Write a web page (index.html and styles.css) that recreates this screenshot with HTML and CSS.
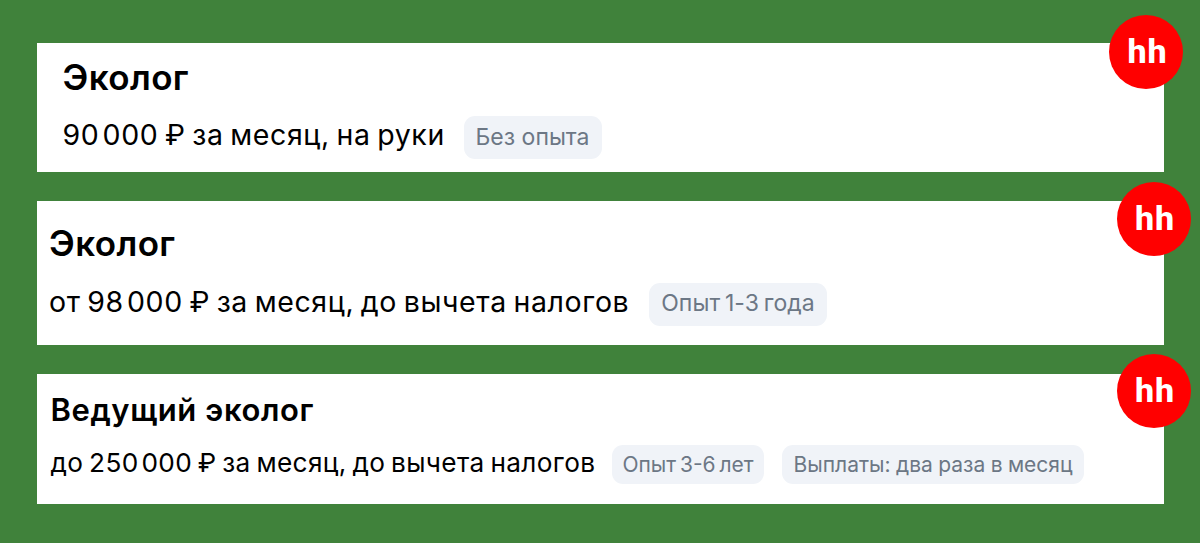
FILE: index.html
```html
<!DOCTYPE html>
<html lang="ru">
<head>
    <meta charset="utf-8">
    <title>Вакансии эколога</title>
    <link rel="stylesheet" href="styles.css">
</head>
<body>
    <div class="vacancies">
        <div class="card card-first">
            <h2>Эколог</h2>
            <div class="info">
                <span class="salary">90&#8202;000 ₽ за месяц, на руки</span>
                <span class="tag">Без опыта</span>
            </div>
            <div class="logo">hh</div>
        </div>

        <div class="card card-second">
            <h2>Эколог</h2>
            <div class="info">
                <span class="salary">от 98&#8202;000 ₽ за месяц, до вычета налогов</span>
                <span class="tag">Опыт 1-3 года</span>
            </div>
            <div class="logo">hh</div>
        </div>

        <div class="card card-third">
            <h2>Ведущий эколог</h2>
            <div class="info">
                <span class="salary">до 250&#8202;000 ₽ за месяц, до вычета налогов</span>
                <span class="tag">Опыт 3-6 лет</span>
                <span class="tag tag-payment">Выплаты: два раза в месяц</span>
            </div>
            <div class="logo">hh</div>
        </div>
    </div>
</body>
</html>
```
FILE: styles.css
```css
* {
    box-sizing: border-box;
}

body {
    margin: 0;
    height: 543px;
    font-family: Inter, "Liberation Sans", sans-serif;
    background-color: #40823b;
    color: #000;
    overflow: hidden;
}

.vacancies {
    display: flex;
    flex-direction: column;
    gap: 29px;
    padding: 43px 36.5px 0;
}

.card {
    position: relative;
    background-color: #fff;
}

.card-first {
    height: 128.5px;
    padding: 14px 26px 0;
}

.card-second {
    height: 144.5px;
    padding: 22px 12.5px 0;
}

.card-third {
    height: 130px;
    padding: 15.5px 14px 0;
}

h2 {
    margin: 0;
    font-size: 35px;
    font-weight: 600;
    line-height: 40px;
    letter-spacing: 0.4px;
}

.info {
    display: flex;
    align-items: flex-start;
    margin-top: 17px;
}

.salary {
    width: 401px;
    font-size: 28.5px;
    line-height: 42px;
    letter-spacing: 0.62px;
    word-spacing: -2px;
    white-space: nowrap;
}

.tag {
    width: 138px;
    margin-top: 2px;
    font-size: 23px;
    line-height: 43px;
    text-align: center;
    white-space: nowrap;
    color: #6c7785;
    background-color: #f0f3f8;
    border-radius: 11px;
}

.card-second .info {
    margin-top: 18px;
}

.card-second .salary {
    width: 600px;
}

.card-second .tag {
    width: 178px;
    line-height: 41px;
    padding-bottom: 2px;
    letter-spacing: 0.1px;
    word-spacing: -2px;
}

.card-third h2 {
    font-size: 31px;
    letter-spacing: 0.6px;
}

.card-third .info {
    margin-top: 11px;
}

.card-third .salary {
    width: 561.5px;
    font-size: 26.2px;
    line-height: 43px;
    letter-spacing: 0.37px;
}

.card-third .tag {
    width: 152px;
    margin-top: 4px;
    font-size: 21px;
    line-height: 39px;
    letter-spacing: 0;
    word-spacing: -2px;
}

.card-third .tag-payment {
    width: 302px;
    margin-left: 18px;
    word-spacing: -0.5px;
}

.logo {
    position: absolute;
    top: -19px;
    right: -27px;
    width: 74px;
    height: 74px;
    padding-left: 3px;
    border-radius: 50%;
    font-family: Roboto, "Liberation Sans", sans-serif;
    font-size: 34px;
    font-weight: 800;
    line-height: 72px;
    letter-spacing: 0.8px;
    text-align: center;
    color: #fff;
    background-color: #f00;
}

.card-first .logo {
    top: -28px;
    right: -19.5px;
}

.card-third .logo {
    top: -20px;
}
```
